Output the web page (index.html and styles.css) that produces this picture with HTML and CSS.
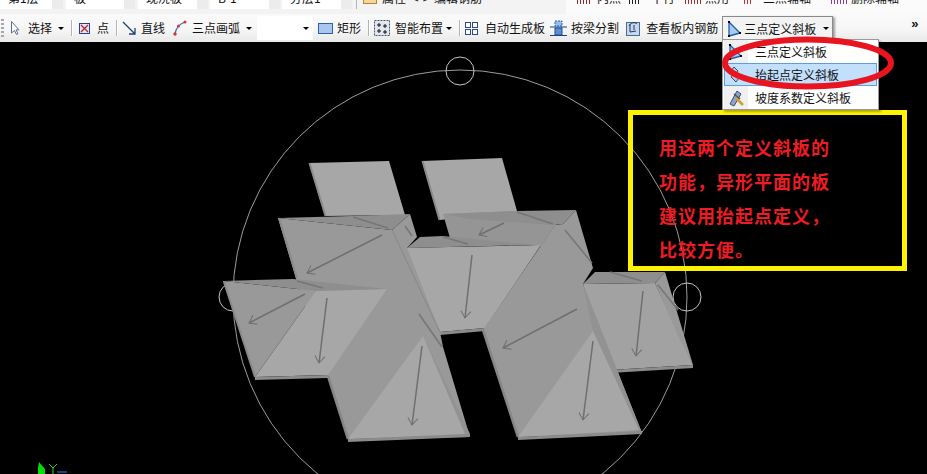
FILE: index.html
```html
<!DOCTYPE html>
<html lang="zh-CN">
<head>
<meta charset="utf-8">
<title>三点定义斜板</title>
<link rel="stylesheet" href="styles.css">
</head>
<body>
<div class="app">
  <div class="row-top">
    <div class="combo"><span class="combo-text">第1层</span><i class="combo-btn"></i></div>
    <div class="combo"><span class="combo-text">板</span><i class="combo-btn"></i></div>
    <div class="combo"><span class="combo-text">现浇板</span><i class="combo-btn"></i></div>
    <div class="combo"><span class="combo-text">B-1</span><i class="combo-btn"></i></div>
    <div class="combo"><span class="combo-text">分层1</span><i class="combo-btn"></i></div>
    <i class="sep-top"></i>
    <i class="prop-icon"></i>
    <span class="top-label w-prop">属性</span>
    <span class="top-label w-arrows">&lt;-&gt;</span>
    <span class="top-label">编辑钢筋</span>
    <div class="top-right">
      <i class="stub s1"></i><span class="top-label">内点</span>
      <i class="stub s2"></i><span class="top-label">十行</span>
      <i class="stub s3"></i><span class="top-label">点用</span>
      <i class="stub s4"></i><span class="top-label">三点辅轴</span>
      <i class="stub s5"></i><span class="top-label">删除辅轴</span>
    </div>
  </div>

  <div class="row-tools">
    <i class="grip"></i>
    <div class="tool t-select">
      <svg class="ic" width="10" height="16" viewBox="0 0 10 16"><path d="M1.500 1.500V13l3-2.500 2 4 1.500-.8-2-3.800H9z" fill="#fff" stroke="#5b6f8f"/></svg>
      <span class="lbl l-select">选择</span><i class="caret c-select"></i>
    </div>
    <i class="sep s-a"></i>
    <div class="tool t-point">
      <svg class="ic" width="11" height="11" viewBox="0 0 11 11"><rect x=".5" y=".5" width="10" height="10" fill="#dfe6f5" stroke="#2c3f8c"/><path d="M2 2l7 7M9 2l-7 7" stroke="#c02828" stroke-width="1.300"/></svg>
      <span class="lbl l-point">点</span>
    </div>
    <i class="sep s-b"></i>
    <div class="tool t-line">
      <svg class="ic" width="14" height="14" viewBox="0 0 14 14"><path d="M1 1l12 12M13 7v6H7" fill="none" stroke="#1f3f78" stroke-width="1.300"/></svg>
      <span class="lbl l-line">直线</span>
    </div>
    <div class="tool t-arc">
      <svg class="ic" width="14" height="16" viewBox="0 0 14 16"><path d="M2 14C3 8 6 4 12 2" fill="none" stroke="#2a72b8" stroke-width="1.300"/><circle cx="2" cy="14" r="1.700" fill="#d4382c"/><circle cx="5.500" cy="6" r="1.500" fill="#d4382c"/><circle cx="12" cy="2" r="1.500" fill="#d4382c"/></svg>
      <span class="lbl l-arc">三点画弧</span><i class="caret c-arc"></i>
    </div>
    <div class="field"><i class="caret"></i></div>
    <div class="tool t-rect">
      <svg class="ic" width="15" height="11" viewBox="0 0 15 11"><rect x=".5" y=".5" width="14" height="10" fill="#a9c6ee" stroke="#2f5fb0"/></svg>
      <span class="lbl l-rect">矩形</span>
    </div>
    <i class="sep s-c"></i>
    <div class="tool t-smart">
      <svg class="ic" width="16" height="16" viewBox="0 0 16 16"><rect x=".5" y=".5" width="15" height="15" fill="#e3e8ee" stroke="#44546a" stroke-dasharray="2 1"/><path d="M5 3v4M3 5h4M11 4v4M9 6h4M5 9v4M3 11h4M11 10v4M9 12h4" stroke="#111"/></svg>
      <span class="lbl l-smart">智能布置</span><i class="caret c-smart"></i>
    </div>
    <i class="sep s-d"></i>
    <div class="tool t-auto">
      <svg class="ic" width="13" height="13" viewBox="0 0 13 13"><g fill="#fff" stroke="#2c4a86"><rect x=".5" y=".5" width="5" height="5"/><rect x="7.500" y=".5" width="5" height="5"/><rect x=".5" y="7.500" width="5" height="5"/><rect x="7.500" y="7.500" width="5" height="5"/></g></svg>
      <span class="lbl l-auto">自动生成板</span>
    </div>
    <div class="tool t-beam">
      <svg class="ic" width="17" height="18" viewBox="0 0 17 18"><rect x="5" y="2" width="7" height="5" fill="#8ec1ee" stroke="#2d62b0" stroke-dasharray="2 1"/><rect x="5" y="9" width="7" height="7" fill="#5c8fd0" stroke="#1f4a94"/><path d="M0 8h17M0 16.500h17" stroke="#1f3f88"/></svg>
      <span class="lbl l-beam">按梁分割</span>
    </div>
    <div class="tool t-view">
      <svg class="ic" width="14" height="16" viewBox="0 0 14 16"><rect x=".5" y="2.500" width="13" height="13" fill="#c6d8ee" stroke="#4a6a96"/><path d="M3 6c2-4 6-4 8-2M4 4v8l6-1M8 5v5" fill="none" stroke="#23385c"/></svg>
      <span class="lbl l-view">查看板内钢筋</span>
    </div>
    <div class="tool-open">
      <svg class="ic" width="15" height="18" viewBox="0 0 15 18"><path d="M2 2v14l11-3z" fill="#a8cbf0"/><path d="M2 2v14M2 16l11-3M2 2l11 11" stroke="#1c5cb0" stroke-width="1.300" fill="none"/><rect x="1" y="1" width="2" height="2" fill="#000"/><rect x="1" y="15" width="2" height="2" fill="#000"/><rect x="12" y="12" width="2" height="2" fill="#000"/></svg>
      <span class="lbl l-open">三点定义斜板</span><i class="caret c-open"></i>
    </div>
    <span class="more">»</span>
  </div>

  <div class="stage">
    <svg class="scene" viewBox="0 42 927 432" width="927" height="432">
      <defs>
        <marker id="head" markerWidth="12" markerHeight="14" refX="8" refY="7" orient="auto" markerUnits="userSpaceOnUse">
          <path d="M1 2l7 5-7 5" fill="none" stroke="#6f6f6f" stroke-width="1"/>
        </marker>
      </defs>
      <g class="ring">
        <circle class="ring-big" cx="460" cy="297" r="227"/>
        <circle cx="460" cy="71" r="14"/>
        <circle cx="233" cy="297" r="14"/>
        <circle cx="687" cy="297" r="14"/>
      </g>

      <polygon class="lt" points="309,163 389,161 405,215 325,216"/>
      <path class="edge" d="M309.500 163l16 53"/>
      <polygon class="lt" points="422,161 502,158 517,211 440,220"/>
      <path class="edge" d="M422.500 161l17 59"/>

      <polygon class="bd" points="443,214 450,238 541,246 556,224 517,211"/>
      <polygon class="bd2" points="443,214 517,211 576,210 563,224 553,225 470,219"/>

      <polygon class="lt2" points="583,284 655,283 693,365 610,370"/>
      <polygon class="md" points="655,283 665,272 693,365 680,340"/>
      <polygon class="bd2" points="583,284 595,272 665,272 655,283"/>
      <polygon class="bt" points="610,370 693,365 693,368 610,373"/>

      <polygon class="lt" points="400,248 541,245 485,328 440,332"/>
      <polygon class="bd2" points="407,248 420,237 443,236 537,245"/>
      <polygon class="bt" points="440,332 485,328 485,331 440,335"/>

      <polygon class="md" points="555,225 563,224 576,210 593,268 583,284 642,433 518,437 483,330"/>
      <polygon class="md2" points="583,284 642,433 635,433 593,331"/>
      <polygon class="lt" points="593,331 639,430 518,437"/>
      <polygon class="bt" points="518,437 642,431 642,434 518,440"/>
      <path class="edge2" d="M483 330l35 107"/>

      <polygon class="md" points="278,218 392,230 410,214 417,237 407,248 440,332 443,347 470,437 348,439 328,376 296,279"/>
      <polygon class="md2" points="423,336 470,434 461,434"/>
      <polygon class="lt" points="423,336 465,434 348,439"/>
      <polygon class="bt" points="348,439 470,434 470,437 348,442"/>
      <polygon class="bd2" points="278,218 352,216 410,214 392,230"/>
      <path class="edge" d="M279 218l18 60"/>
      <path class="edge2" d="M328 376l20 63"/>
      <path class="crease" d="M392 230l48 102"/>

      <polygon class="md" points="223,281 316,291 255,377"/>
      <polygon class="lt" points="316,291 387,289 328,375 255,377"/>
      <polygon class="bd2" points="223,281 293,279 387,289 316,291"/>
      <polygon class="bt" points="255,377 328,375 328,378 255,380"/>
      <path class="edge" d="M224 282l31 95"/>

      <g class="marks">
        <path d="M419 314l23 33M405 226l7 10M353 217l35 11M297 281l26 7M565 230l27 33M658 285l20 25M610 272l32 9M517 212l36 12M443 237l25 7"/>
      </g>
      <g class="arrows">
        <path marker-end="url(#head)" d="M382 235L307 273"/>
        <path marker-end="url(#head)" d="M305 294L249 323"/>
        <path marker-end="url(#head)" d="M327 298L319 363"/>
        <path marker-end="url(#head)" d="M422 346L412 425"/>
        <path marker-end="url(#head)" d="M472 255L465 318"/>
        <path marker-end="url(#head)" d="M577 309L503 348"/>
        <path marker-end="url(#head)" d="M593 341L583 420"/>
        <path marker-end="url(#head)" d="M643 291L636 356"/>
        <path marker-end="url(#head)" d="M504 223L479 235"/>
      </g>

      <path class="axis-leaf" d="M39 462l6 7v5h-7v-6z"/>
      <path class="axis-y" d="M49 464l4 4 4-4M53 468v6"/>
      <path class="axis-x" d="M57 472h10"/>
    </svg>

    <div class="note">
      <p>用这两个定义斜板的</p>
      <p>功能<span class="punct">，</span>异形平面的板</p>
      <p>建议用抬起点定义<span class="punct">，</span></p>
      <p>比较方便。</p>
    </div>
  </div>

  <div class="menu">
    <div class="menu-item">
      <span class="menu-ic"><svg width="15" height="18" viewBox="0 0 15 18"><path d="M2 2v14l11-3z" fill="#a8cbf0"/><path d="M2 2v14M2 16l11-3M2 2l11 11" stroke="#1c5cb0" stroke-width="1.300" fill="none"/><rect x="1" y="1" width="2" height="2" fill="#000"/><rect x="1" y="15" width="2" height="2" fill="#000"/><rect x="12" y="12" width="2" height="2" fill="#000"/></svg></span>
      <span>三点定义斜板</span>
    </div>
    <div class="menu-item active">
      <span class="menu-ic"><svg width="16" height="18" viewBox="0 0 16 18"><path d="M6 1l4 4-2 3 3 4-3 4-5-5 2-3-2-3z" fill="#b9c6da" stroke="#3d4f70"/></svg></span>
      <span>抬起点定义斜板</span>
    </div>
    <div class="menu-item">
      <span class="menu-ic"><svg width="18" height="18" viewBox="0 0 18 18"><path d="M2 15L9 2l4 3-7 12z" fill="#8fa4c6" stroke="#36507c"/><path d="M8 9l7 7" stroke="#d0a030" stroke-width="2.500"/><path d="M6 5l6 5" stroke="#555" stroke-width="1.500"/></svg></span>
      <span>坡度系数定义斜板</span>
    </div>
  </div>

  <svg class="ellipse" width="927" height="120" viewBox="0 0 927 120">
    <ellipse cx="808" cy="63" rx="83" ry="23.500"/>
  </svg>
</div>
</body>
</html>
```

FILE: styles.css
```css
* { box-sizing: border-box; }
html, body { margin: 0; padding: 0; background: #000; }
body { font: 12px/16px "Noto Sans CJK SC", "Liberation Sans", sans-serif; color: #111; }
i { display: block; flex: none; }

.app { position: relative; width: 927px; height: 474px; overflow: hidden; display: flex; flex-direction: column; background: #000; }

/* clipped upper toolbar */
.row-top { flex: none; height: 14px; display: flex; align-items: flex-start; background: #f3f3f3; overflow: hidden; }
.combo { width: 63px; height: 9px; margin-right: 9px; display: flex; background: #fff; flex: none; }
.combo:first-child { margin-right: 3px; }
.combo:nth-child(2) { width: 69px; margin-right: 3px; }
.combo:nth-child(3) { width: 70px; margin-right: 2px; }
.combo:nth-child(4) { width: 70px; margin-right: 2px; }
.combo:nth-child(5) { width: 70px; margin-right: 4px; }
.combo-text { flex: 1; margin-top: -10px; padding-left: 8px; line-height: 16px; }
.combo-btn { width: 11px; height: 9px; background: #ececec; }
.sep-top { width: 1px; height: 9px; background: #b5b5b5; }
.prop-icon { width: 14px; height: 4px; margin: 0 5px 0 6px; background: #f6d79a; border: 1px solid #b8862c; border-top: 0; }
.top-label { margin-top: -10px; line-height: 16px; white-space: nowrap; }
.w-prop { width: 30px; }
.w-arrows { width: 22px; }
.top-right { margin-left: auto; width: 361px; height: 14px; display: flex; align-items: flex-start; background: #fbfbfb; padding-left: 11px; }
.stub { height: 4px; background: repeating-linear-gradient(90deg, var(--stub) 0 1px, transparent 1px 3px); }
.s1 { --stub: #8a2a2a; width: 14px; margin-right: 6px; }
.s2 { --stub: #222; width: 12px; margin: 0 10px 0 8px; }
.s3 { --stub: #a02828; width: 16px; margin: 0 4px 0 10px; }
.s4 { --stub: #c03030; width: 8px; margin: 0 11px 0 15px; }
.s5 { --stub: #8a3a9a; width: 17px; margin: 0 3px 0 20px; }

/* main toolbar */
.row-tools { flex: none; height: 28px; display: flex; align-items: center; background: linear-gradient(#fafafa, #f6f6f6 55%, #e9e9e9); }
.grip { width: 3px; height: 18px; margin-left: 1px; background: repeating-linear-gradient(#a8a8a8 0 2px, transparent 2px 4px); }
.tool { display: flex; align-items: center; flex: none; }
.ic { display: block; flex: none; }
.lbl { white-space: nowrap; }
.caret { width: 0; height: 0; border-left: 3px solid transparent; border-right: 3px solid transparent; border-top: 3px solid #000; }
.sep { width: 1px; height: 16px; background: #b4b4b4; box-shadow: 1px 0 #fff; }

.t-select { margin-left: 6px; }
.l-select { margin-left: 8px; }
.c-select { margin-left: 6px; }
.s-a { margin-left: 7px; }
.t-point { margin-left: 7px; }
.l-point { margin-left: 7px; }
.s-b { margin-left: 7px; }
.t-line { margin-left: 5px; }
.l-line { margin-left: 5px; }
.t-arc { margin-left: 8px; }
.l-arc { margin-left: 5px; }
.c-arc { margin-left: 6px; }
.field { width: 56px; height: 24px; margin-left: 5px; flex: none; background: #fff; display: flex; align-items: center; justify-content: flex-end; padding-right: 4px; }
.t-rect { margin-left: 5px; }
.l-rect { margin-left: 4px; }
.s-c { margin-left: 7px; }
.t-smart { margin-left: 5px; }
.l-smart { margin-left: 5px; }
.c-smart { margin-left: 3px; }
.s-d { margin-left: 7px; }
.t-auto { margin-left: 5px; }
.l-auto { margin-left: 7px; }
.t-beam { margin-left: 5px; }
.l-beam { margin-left: 4px; }
.t-view { margin-left: 7px; }
.l-view { margin-left: 6px; }
.tool-open { flex: none; align-self: flex-end; width: 111px; height: 26px; margin-left: 4px; padding: 0 0 2px 4px; display: flex; align-items: center; background: #f3f3f3; border: 1px solid #8a8a8a; border-bottom: 0; box-shadow: 2px 1px 2px rgba(0, 0, 0, .35); position: relative; z-index: 2; }
.l-open { margin-left: 2px; }
.c-open { margin-left: 7px; }
.more { margin-left: 78px; margin-top: -8px; font: bold 13px/14px "Liberation Sans", sans-serif; color: #111; }

/* 3D view */
.stage { position: relative; flex: 1; background: #000; overflow: hidden; }
.scene { display: block; }
.ring circle { fill: none; stroke: #c4c4c4; stroke-width: 1; }
.ring .ring-big { stroke: #9c9c9c; }
.lt { fill: #a7a7a7; }
.lt2 { fill: #a2a2a2; }
.md { fill: #999; }
.md2 { fill: #929292; }
.bd { fill: #959595; }
.bd2 { fill: #8e8e8e; }
.bt { fill: #8b8b8b; }
.edge { fill: none; stroke: #8a8a8a; stroke-width: 2; }
.edge2 { fill: none; stroke: #868686; stroke-width: 2.500; }
.crease { fill: none; stroke: #888; stroke-width: 1; }
.marks path { fill: none; stroke: #767676; stroke-width: 1.500; }
.arrows path { fill: none; stroke: #6f6f6f; stroke-width: 1.500; }
.axis-leaf { fill: #00e000; }
.axis-y { fill: none; stroke: #30d030; stroke-width: 1; }
.axis-x { fill: none; stroke: #2080e8; stroke-width: 1; }

.note { position: absolute; left: 628px; top: 68px; width: 279px; height: 161px; padding: 15px 0 0 26px; border: 5px solid #fff200; color: #ed1c24; font-size: 18px; font-weight: 700; line-height: 34px; letter-spacing: 1px; }
.note p { margin: 0; white-space: nowrap; }
.punct { font-family: "Noto Sans CJK TC", sans-serif; }

/* dropdown */
.menu { position: absolute; left: 722px; top: 39px; width: 157px; height: 71px; padding: 0 1px; background: #fff; border: 1px solid #9a9a9a; box-shadow: 2px 2px 2px rgba(0, 0, 0, .3); z-index: 3; }
.menu::before { content: ""; position: absolute; left: 1px; top: 0; bottom: 0; width: 24px; background: #f0f0f0; }
.menu-item { position: relative; height: 23px; display: flex; align-items: center; padding-left: 30px; border: 1px solid transparent; white-space: nowrap; }
.menu-item.active { background: #c2dffb; border-color: #5a9ee6; }
.menu-ic { position: absolute; left: 3px; top: 2px; }
.menu-ic svg { display: block; }

.ellipse { position: absolute; left: 0; top: 0; z-index: 4; pointer-events: none; }
.ellipse ellipse { fill: none; stroke: #e8141f; stroke-width: 6; }
```
